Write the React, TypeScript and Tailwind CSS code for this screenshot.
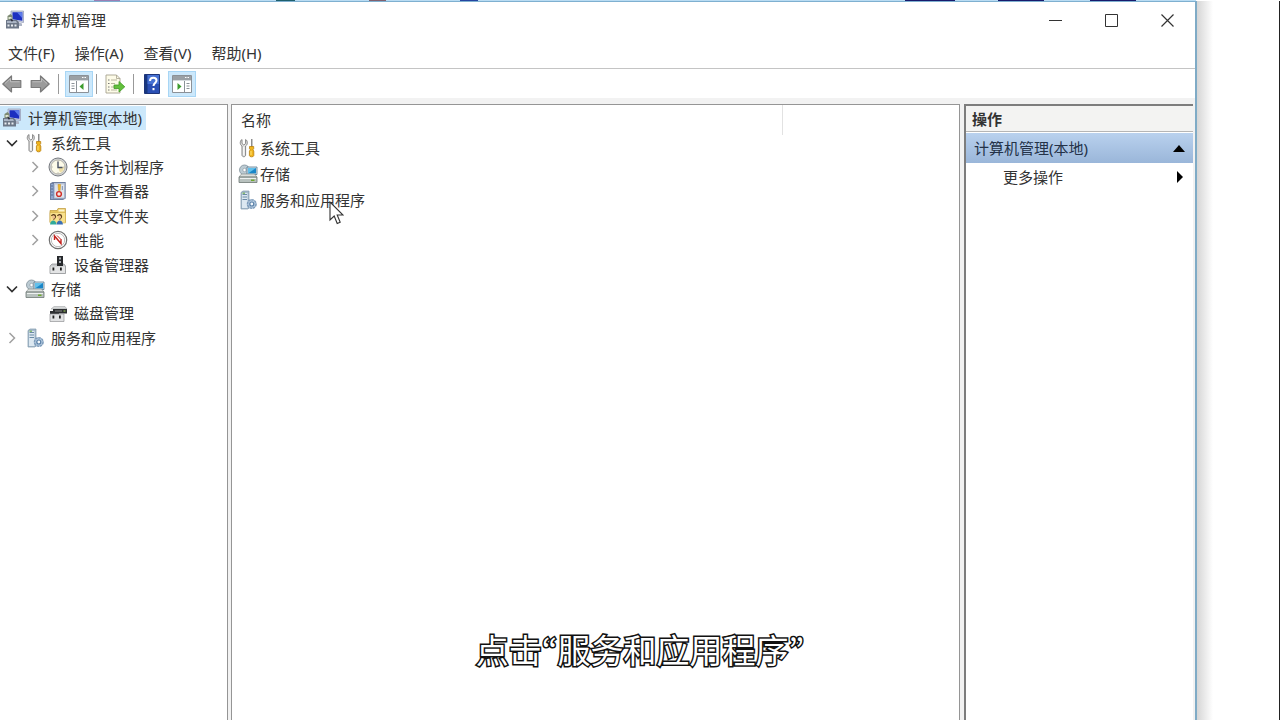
import type {ReactNode} from "react"

function ComputerIcon({size = 20}: {size?: number}) {
  return (
    <svg width={size} height={size} viewBox="0 0 20 20" className="shrink-0">
      <path d="M6 1h12.500v11.500L6 10.500z" fill="#c9cfe2" stroke="#9aa3bd" strokeWidth=".8" />
      <path d="M7.500 2.200h9.800v8.600l-9.800-1.600z" fill="#1c2fc0" />
      <path d="M12 2.200h5.300v6z" fill="#5d7bea" />
      <path d="M12 12l5 1.500v2.500h-4z" fill="#aeb5c6" />
      <path d="M2.500 6l3-2 2 2v4h-5z" fill="#7d8a72" />
      <path d="M3.500 7h3v2h-3z" fill="#dfe5d0" />
      <path d="M1 10h11l2 2.500v6H1z" fill="#6d7787" />
      <path d="M2 11h9l1 2H2z" fill="#aab4c4" />
      <path d="M2.500 14.500h2v2h-2zM6 14.500h2v2H6zM9.500 14.500h2v2h-2z" fill="#e8ebf0" />
      <path d="M5 8.500l3 1.500-1 2z" fill="#223" />
    </svg>
  )
}

function ToolsIcon() {
  return (
    <svg width="20" height="20" viewBox="0 0 20 20" className="shrink-0">
      <path
        d="M4 1.500v4l1.800 1.500 1.800-1.500v-4c2 1 2.600 4.800 0 6.500V17c0 2.300-3.600 2.300-3.600 0V8C1.400 6.500 2 2.500 4 1.500z"
        fill="#e2e2e2"
        stroke="#858585"
        strokeWidth="1"
      />
      <path d="M5.800 9v8" stroke="#fff" strokeWidth="1" />
      <path d="M13 1h1.500v8H13z" fill="#8d8d8d" />
      <path d="M11.500 8.500h4.200v2.300l-.8 1 .9 1.200v4.500c0 1.800-4.400 1.800-4.400 0V13l1-1.200-.9-1z" fill="#f0b51d" stroke="#b97f10" strokeWidth=".8" />
      <path d="M13 13v4" stroke="#ffe27a" strokeWidth="1" />
    </svg>
  )
}

function ClockIcon() {
  return (
    <svg width="20" height="20" viewBox="0 0 20 20" className="shrink-0">
      <circle cx="10" cy="10" r="9" fill="#d2d4d6" stroke="#777b80" strokeWidth="1" />
      <circle cx="10" cy="10" r="7" fill="#fdfbe9" stroke="#a6a496" strokeWidth=".7" />
      <path d="M10 10h6a6 6 0 0 1-4 5.600z" fill="#ecdda6" />
      <path d="M10 4.500V10.500h4.500" fill="none" stroke="#4a5364" strokeWidth="1.400" />
      <path d="M10 3.500v1M10 15.500v1M3.500 10h1M15.500 10h1" stroke="#999" strokeWidth="1" />
    </svg>
  )
}

function EventIcon() {
  return (
    <svg width="20" height="20" viewBox="0 0 20 20" className="shrink-0">
      <path d="M2 2.500L4.500 1h13.200v16.500L15 19H2z" fill="#6f7f9f" />
      <path d="M3 3h2.500v15H3z" fill="#8ea6cf" />
      <path d="M6 2h10.800v15.500H6z" fill="#b9c3d6" />
      <path d="M7 3.500h9v13H7z" fill="#dfe4ec" />
      <path d="M3 5h2M3 8h2M3 11h2M3 14h2" stroke="#4d5f86" strokeWidth=".8" />
      <path d="M10 3.500h2.600l-.5 6h-1.600z" fill="#f0b929" stroke="#c68f1d" strokeWidth=".5" />
      <circle cx="11" cy="13" r="2.400" fill="#f8e4e2" stroke="#cf2e27" strokeWidth="1.400" />
      <path d="M13.800 5H15v4h-1.200z" fill="#8fa0bd" />
    </svg>
  )
}

function SharedFolderIcon() {
  return (
    <svg width="20" height="20" viewBox="0 0 20 20" className="shrink-0">
      <path d="M2 4.500h7l1-2h7.500V16H2z" fill="#e7c55e" stroke="#bd9838" strokeWidth=".7" />
      <path d="M10.500 3.500h6v2h-6z" fill="#fdf5cd" />
      <path d="M2 6.500h15.500V17H2z" fill="#f8e08c" stroke="#cfac4b" strokeWidth=".6" />
      <path d="M3.500 10c1-2 4-1.500 4 .5 0 1.500-1.500 2-2 3" fill="none" stroke="#5b3a1c" strokeWidth="1.300" />
      <circle cx="5.500" cy="11.400" r="1.400" fill="#efbf91" />
      <path d="M2 18.500c.5-5.500 6-5.500 6.500 0z" fill="#2faa9a" />
      <path d="M9.500 10c1-2 4-1.500 4 .5 0 1.500-1.500 2-2 3" fill="none" stroke="#5b3a1c" strokeWidth="1.300" />
      <circle cx="11.500" cy="11.400" r="1.400" fill="#efbf91" />
      <path d="M8.500 18.500c.5-5.500 6-5.500 6.500 0z" fill="#3b6fb6" />
    </svg>
  )
}

function PerformanceIcon() {
  return (
    <svg width="20" height="20" viewBox="0 0 20 20" className="shrink-0">
      <circle cx="10" cy="10" r="8.700" fill="#fff" stroke="#6f6f6f" strokeWidth="1.200" />
      <circle cx="10" cy="10" r="6.700" fill="#fff" stroke="#a9a9a9" strokeWidth=".8" />
      <path d="M6.500 10V6l6.500 7.500V9.500" fill="none" stroke="#c3201c" strokeWidth="1.400" />
      <path d="M9 5.500l4.500 4.500" stroke="#c3201c" strokeWidth="1" />
    </svg>
  )
}

function DeviceIcon() {
  return (
    <svg width="20" height="20" viewBox="0 0 20 20" className="shrink-0">
      <path d="M9 1h6v10H9z" fill="#26282b" />
      <path d="M11 2.500h2v2h-2zM11 6h2v3h-2z" fill="#a8adb2" />
      <path d="M2 11l2-2h12l1.500 2v7.500H2z" fill="#c8cacc" stroke="#85888b" strokeWidth=".7" />
      <path d="M9 8h6v3H9z" fill="#26282b" />
      <path d="M2.500 11.500h14.500v6.500H2.500z" fill="#e3e4e5" />
      <path d="M4.500 12.500h1.800v3H4.500zM12 12.500h1.800v3H12z" fill="#1f1f1f" />
    </svg>
  )
}

function StorageIcon() {
  return (
    <svg width="20" height="20" viewBox="0 0 20 20" className="shrink-0">
      <circle cx="6.500" cy="6" r="5" fill="#bccbd3" stroke="#82909a" strokeWidth=".8" />
      <circle cx="6.500" cy="6" r="1.700" fill="#fff" stroke="#82909a" strokeWidth=".6" />
      <path d="M9 3h10v7.500H9z" fill="#d9e7ef" stroke="#55778e" strokeWidth=".8" />
      <path d="M10 4h8v5.500h-8z" fill="#1986c8" />
      <path d="M10 9.500L18 4H10z" fill="#62c0eb" />
      <path d="M1 13l2.500-3h13l2.500 3z" fill="#dadfdd" stroke="#7c8581" strokeWidth=".6" />
      <path d="M1 13h18v5.500H1z" fill="#b8c1be" stroke="#6d7773" strokeWidth=".8" />
      <path d="M2 14h16v1H2z" fill="#eef1f0" />
      <path d="M13 15.500h3.500v1.500H13z" fill="#6da72c" />
    </svg>
  )
}

function DiskIcon() {
  return (
    <svg width="20" height="20" viewBox="0 0 20 20" className="shrink-0">
      <path d="M3 6l3-2.500h11L19 6z" fill="#d5d7d8" stroke="#9b9d9f" strokeWidth=".5" />
      <path d="M5 6h14v4.500H5z" fill="#2d2f31" />
      <path d="M2 8h9v3H2z" fill="#2d2f31" />
      <path d="M7 7.500h7v1H7z" fill="#888" />
      <path d="M15.500 7.500h2v1h-2z" fill="#a4d85f" />
      <path d="M2 11h14v7.500H2z" fill="#e1e2e3" stroke="#929496" strokeWidth=".7" />
      <path d="M4.500 12.500h1.800v3H4.500zM11 12.500h1.800v3H11z" fill="#222" />
    </svg>
  )
}

function ServicesIcon() {
  return (
    <svg width="20" height="20" viewBox="0 0 20 20" className="shrink-0">
      <path d="M3 2.500L5 1h6v17l-1 1H3z" fill="#a8bccd" stroke="#7f98ae" strokeWidth=".7" />
      <path d="M4 3h5.500v15H4z" fill="#dce8f1" />
      <path d="M4.500 4.500h4.500M4.500 7h4.500M4.500 9.500h4.500" stroke="#6a8aa5" strokeWidth="1" />
      <path d="M4.500 3.200h2.500" stroke="#63a73b" strokeWidth="1" />
      <circle cx="13.800" cy="14" r="4.300" fill="#b6cbe0" stroke="#7d9cbb" strokeWidth="1.500" strokeDasharray="2.600 .6" />
      <circle cx="13.800" cy="14" r="2" fill="#f2f7fb" stroke="#5b82a8" strokeWidth="1.200" />
    </svg>
  )
}

function ArrowIcon({flip = false}: {flip?: boolean}) {
  return (
    <svg width="20" height="20" viewBox="0 0 20 20" className={flip ? "-scale-x-100" : ""}>
      <path d="M.8 10L9.500 2v4.500h9.300v7H9.500V18z" fill="#9b9b9b" stroke="#7a7a7a" strokeWidth="1.200" strokeLinejoin="round" />
      <path d="M3 9.500L8.500 4.500v3.300h9" fill="none" stroke="#bdbdbd" strokeWidth="1" />
    </svg>
  )
}

function PaneIcon({side}: {side: "left" | "right"}) {
  return (
    <svg width="20" height="18" viewBox="0 0 20 18">
      <path d="M.5.5h19v17H.5z" fill="#fff" stroke="#8b9197" />
      <path d="M1 1h18v4H1z" fill="#9aa0a5" />
      <path d="M13 2.500h1.500M15.500 2.500h1.500" stroke="#fff" />
      <path d="M1 5.500h18" stroke="#d6dadd" />
      {side === "left" ? (
        <>
          <path d="M7.500 6v11" stroke="#8b9197" />
          <path d="M2.500 8.500h3M2.500 11h3M2.500 13.500h3" stroke="#8b9197" />
          <path d="M14.500 8v7l-4-3.500z" fill="#3d9c2d" />
        </>
      ) : (
        <>
          <path d="M12.500 6v11" stroke="#8b9197" />
          <path d="M14.500 8.500h3M14.500 11h3M14.500 13.500h3" stroke="#8b9197" />
          <path d="M5.500 8v7l4-3.500z" fill="#3d9c2d" />
        </>
      )}
    </svg>
  )
}

function ExportIcon() {
  return (
    <svg width="20" height="20" viewBox="0 0 20 20">
      <path d="M1 1h10.500L15 4.500V19H1z" fill="#fdfbe8" stroke="#a6a28e" strokeWidth=".9" />
      <path d="M11.500 1v3.500H15" fill="none" stroke="#a6a28e" strokeWidth=".8" />
      <path d="M3 6h1.500M3 9.500h1.500M3 13h1.500M3 16h1.500" stroke="#777" strokeWidth="1" />
      <path d="M6 6h6M6 9.500h4M6 13h3M6 16h6" stroke="#b9b79f" strokeWidth="1" />
      <path d="M9 11h5V7.500l5.800 5.300L14 18v-3.500H9z" fill="#63c03c" stroke="#3f9a25" strokeWidth=".8" />
    </svg>
  )
}

function HelpIcon() {
  return (
    <svg width="16" height="20" viewBox="0 0 16 20">
      <path d="M.5.5h15v19H.5z" fill="#2a4fb4" stroke="#1d3478" />
      <path d="M1 1h2.500v18H1z" fill="#18377f" />
      <path d="M3.500 1H15v9H3.500z" fill="#4570d2" />
      <path d="M6 7c0-4.500 6.500-4 6.500-.5 0 2.500-3 2.500-3 5.500" fill="none" stroke="#fff" strokeWidth="2" />
      <path d="M8.500 14h2v2.200h-2z" fill="#fff" />
    </svg>
  )
}

function Chevron({open}: {open: boolean}) {
  return (
    <svg width="12" height="12" viewBox="0 0 12 12" fill="none">
      {open ? (
        <path d="M1 3.500l5 5 5-5" stroke="#303030" strokeWidth="1.700" />
      ) : (
        <path d="M3.500 1l5 5-5 5" stroke="#a0a0a0" strokeWidth="1.500" />
      )}
    </svg>
  )
}

interface TreeItem {
  label: string
  icon: ReactNode
  depth: number
  open?: boolean
  selected?: boolean
}

const tree: TreeItem[] = [
  {label: "计算机管理(本地)", icon: <ComputerIcon />, depth: 0, selected: true},
  {label: "系统工具", icon: <ToolsIcon />, depth: 1, open: true},
  {label: "任务计划程序", icon: <ClockIcon />, depth: 2, open: false},
  {label: "事件查看器", icon: <EventIcon />, depth: 2, open: false},
  {label: "共享文件夹", icon: <SharedFolderIcon />, depth: 2, open: false},
  {label: "性能", icon: <PerformanceIcon />, depth: 2, open: false},
  {label: "设备管理器", icon: <DeviceIcon />, depth: 2},
  {label: "存储", icon: <StorageIcon />, depth: 1, open: true},
  {label: "磁盘管理", icon: <DiskIcon />, depth: 2},
  {label: "服务和应用程序", icon: <ServicesIcon />, depth: 1, open: false},
]

const rows = [
  {label: "系统工具", icon: <ToolsIcon />},
  {label: "存储", icon: <StorageIcon />},
  {label: "服务和应用程序", icon: <ServicesIcon />},
]

const menus = ["文件(F)", "操作(A)", "查看(V)", "帮助(H)"]

function TreeRow({item}: {item: TreeItem}) {
  return (
    <li
      role="treeitem"
      aria-level={item.depth + 1}
      aria-selected={!!item.selected}
      className="flex flex-1 items-center"
    >
      {item.depth === 2 && <span className="w-[23px]" />}
      {item.depth > 0 && (
        <span className="flex w-[23px] justify-center">
          {item.open !== undefined && (
            <button aria-label={item.open ? "折叠" : "展开"}>
              <Chevron open={item.open} />
            </button>
          )}
        </span>
      )}
      <span
        className={`flex h-6 items-center gap-1.5 pr-1 pl-0.5 ${item.selected ? "bg-[#cce8fb]" : ""}`}
      >
        {item.icon}
        {item.label}
      </span>
    </li>
  )
}

function TitleBar() {
  return (
    <header className="flex h-9 shrink-0 items-center pl-[5px]">
      <ComputerIcon />
      <h1 className="ml-1.5 flex-1">计算机管理</h1>
      <button aria-label="最小化" className="flex h-full w-14 items-center justify-center">
        <svg width="13" height="13" viewBox="0 0 13 13" stroke="#333" fill="none">
          <path d="M0 6.500h13" />
        </svg>
      </button>
      <button aria-label="最大化" className="flex h-full w-14 items-center justify-center">
        <svg width="13" height="13" viewBox="0 0 13 13" stroke="#333" fill="none">
          <path d="M.5.5h12v12H.5z" />
        </svg>
      </button>
      <button aria-label="关闭" className="flex h-full w-14 items-center justify-center">
        <svg width="13" height="13" viewBox="0 0 13 13" stroke="#333" strokeWidth="1.200" fill="none">
          <path d="M.5.5l12 12M12.500.5l-12 12" />
        </svg>
      </button>
    </header>
  )
}

function Toolbar() {
  return (
    <div role="toolbar" className="flex h-[30px] shrink-0 items-center border-t border-[#c4c4c4] pl-0.5">
      <button aria-label="后退"><ArrowIcon /></button>
      <button aria-label="前进" className="ml-2"><ArrowIcon flip /></button>
      <span className="ml-2 h-5 w-px bg-[#999]" />
      <button
        aria-label="显示/隐藏控制台树"
        className="ml-1.5 flex h-[26px] w-7 items-center justify-center border border-[#a8d6f5] bg-[#cce8fb]"
      >
        <PaneIcon side="left" />
      </button>
      <span className="ml-[3px] h-5 w-px bg-[#999]" />
      <button aria-label="导出列表" className="ml-2"><ExportIcon /></button>
      <span className="ml-2 h-5 w-px bg-[#999]" />
      <button aria-label="帮助" className="ml-2.5"><HelpIcon /></button>
      <button
        aria-label="显示/隐藏操作窗格"
        className="ml-2 flex h-[26px] w-7 items-center justify-center border border-[#a8d6f5] bg-[#cce8fb]"
      >
        <PaneIcon side="right" />
      </button>
    </div>
  )
}

function ActionsPane() {
  return (
    <aside className="flex w-[229px] shrink-0 flex-col border-t-2 border-l-2 border-[#7d7d7d] bg-white">
      <h2 className="flex h-[26px] items-center border-b border-[#b5b5b5] bg-[#f3f3f2] pl-1.5 font-bold">
        操作
      </h2>
      <button className="mt-px flex h-[30px] items-center justify-between bg-linear-to-b from-[#b9d1ee] to-[#9ab6d9] pr-2 pl-2 text-[#243248]">
        计算机管理(本地)
        <svg width="12" height="7" viewBox="0 0 12 7"><path d="M0 7l6-7 6 7z" fill="#000" /></svg>
      </button>
      <button className="flex h-7 items-center justify-between pr-2.5 pl-[37px]">
        更多操作
        <svg width="6" height="12" viewBox="0 0 6 12"><path d="M0 0l6 6-6 6z" fill="#000" /></svg>
      </button>
    </aside>
  )
}

// The quotes use the Korean face, where they are half width instead of full width
function Subtitle() {
  return (
    <p className="absolute inset-x-0 bottom-[49px] text-center text-[33px] leading-10 text-white [-webkit-text-stroke:3px_#111] [paint-order:stroke_fill]">
      点击
      <span className="font-['Noto_Sans_CJK_KR',sans-serif]">“</span>
      服务和应用程序
      <span className="font-['Noto_Sans_CJK_KR',sans-serif]">”</span>
    </p>
  )
}

export default function App() {
  return (
    <div className="relative flex h-screen flex-col overflow-hidden bg-white font-['Noto_Sans','Noto_Sans_CJK_SC',sans-serif] text-[15px] leading-5 text-[#333]">
      <div className="mr-[84px] flex h-px shrink-0 bg-[#b9dcf3]">
        <span className="ml-[94px] w-[26px] bg-[#9a7fb5]" />
        <span className="ml-[156px] w-[19px] bg-[#1f5f6d]" />
        <span className="ml-[74px] w-[17px] bg-[#80616f]" />
        <span className="ml-[74px] w-[18px] bg-[#2546a0]" />
        <span className="ml-[427px] w-[50px] bg-[#171a6c]" />
        <span className="ml-[43px] w-[46px] bg-[#171a6c]" />
        <span className="ml-[46px] w-[46px] bg-[#171a6c]" />
      </div>

      <div className="flex min-h-0 flex-1">
        <div className="flex min-w-0 flex-1 flex-col border-t border-r-2 border-t-[#7fb0d0] border-r-[#7fabc6] bg-white">
          <TitleBar />
          <nav className="flex h-[30px] shrink-0 items-center gap-5 pl-2">
            {menus.map((m) => (
              <button key={m}>{m}</button>
            ))}
          </nav>
          <Toolbar />
          <main className="flex min-h-0 flex-1 bg-[#f2f2f2] pt-1.5 pr-0.5">
            <aside className="w-[228px] shrink-0 border-t border-r border-[#959595] bg-white pt-px">
              <ul role="tree" className="flex h-[244px] flex-col">
                {tree.map((item) => (
                  <TreeRow key={item.label} item={item} />
                ))}
              </ul>
            </aside>
            <section className="ml-[3px] min-w-0 flex-1 border-x border-t border-[#959595] bg-white">
              <table className="w-full table-fixed border-collapse text-left">
                <thead>
                  <tr className="h-[30px]">
                    <th className="w-[550px] border-r border-[#e2e2e2] pl-[9px] font-normal">名称</th>
                    <td />
                  </tr>
                </thead>
                <tbody>
                  {rows.map((r) => (
                    <tr key={r.label} className="h-[26px]">
                      <td className="pl-1.5">
                        <span className="flex items-center gap-0.5">
                          {r.icon}
                          {r.label}
                        </span>
                      </td>
                      <td />
                    </tr>
                  ))}
                </tbody>
              </table>
            </section>
            <div className="w-1" />
            <ActionsPane />
          </main>
        </div>
        <div className="flex w-[83px] shrink-0 justify-between border-r border-[#222]">
          <span className="w-4 bg-linear-to-r from-[#d6d6d6] to-white" />
        </div>
      </div>

      <svg className="absolute top-[201px] left-[329px]" width="15" height="24" viewBox="0 0 15 24">
        <path d="M1 1v18l4.200-4 3 7.500 3-1.200-3-7.300H14z" fill="#fff" stroke="#333" strokeWidth="1.100" />
      </svg>

      <Subtitle />
    </div>
  )
}
